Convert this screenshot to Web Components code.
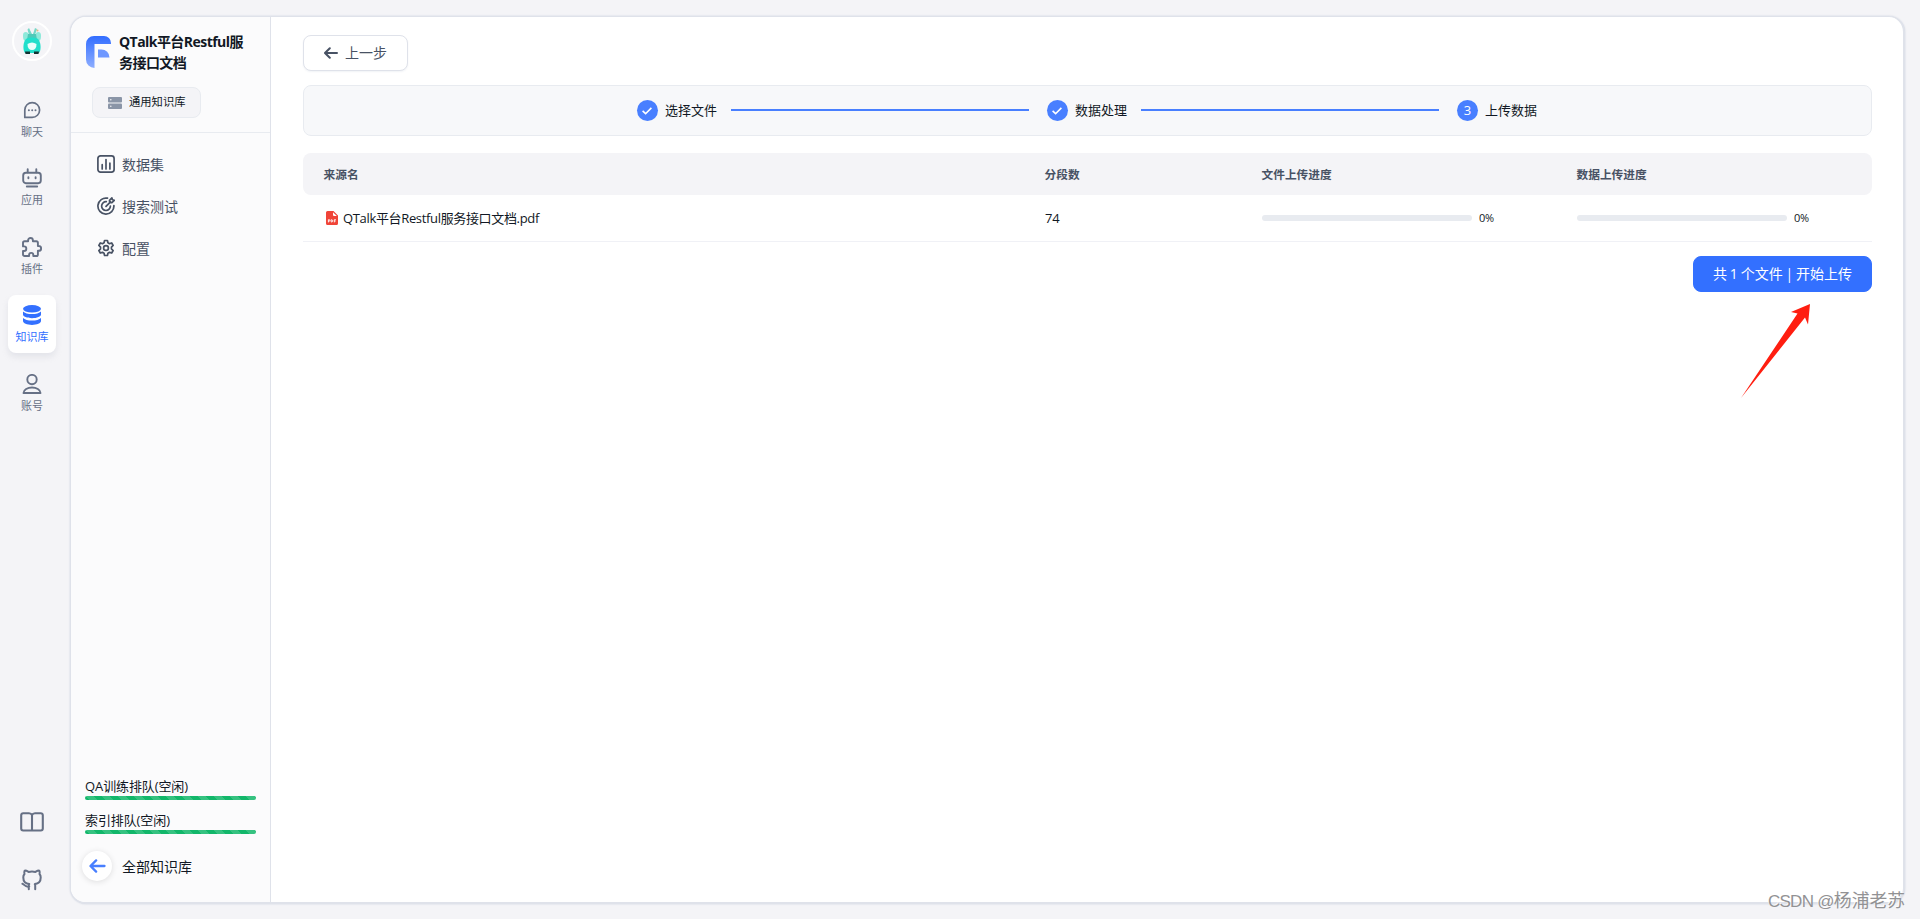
<!DOCTYPE html>
<html lang="zh-CN">
<head>
<meta charset="UTF-8">
<title>QTalk平台Restful服务接口文档</title>
<style>
  html, body { height: 100%; margin: 0; }
  body {
    background: #f4f4f7;
    color: #111824;
    font-family: "Open Sans", "Noto Sans CJK SC", sans-serif;
    font-size: 14px;
    overflow: hidden;
  }
</style>
</head>
<body>
<app-layout>
  <nav-rail slot="rail">
    <nav-item icon="chat">聊天</nav-item>
    <nav-item icon="app">应用</nav-item>
    <nav-item icon="plugin">插件</nav-item>
    <nav-item icon="db" active>知识库</nav-item>
    <nav-item icon="user">账号</nav-item>
  </nav-rail>
  <kb-sidebar slot="side">
    <span slot="title">QTalk平台Restful服务接口文档</span>
    <span slot="tag">通用知识库</span>
    <menu-item icon="chart">数据集</menu-item>
    <menu-item icon="target">搜索测试</menu-item>
    <menu-item icon="gear">配置</menu-item>
    <queue-bar slot="foot">QA训练排队(空闲)</queue-bar>
    <queue-bar slot="foot">索引排队(空闲)</queue-bar>
    <back-link slot="foot">全部知识库</back-link>
  </kb-sidebar>
  <import-page></import-page>
</app-layout>
<hint-arrow></hint-arrow>
<water-mark><span>CSDN @</span>杨浦老苏</water-mark>

<script>
  const ICONS = {
    chat: `<svg width="18" height="18" viewBox="0 0 18 18" fill="none" stroke="currentColor" stroke-width="1.7" stroke-linejoin="round"><path d="M1.800 16.400V9a7.400 7.400 0 1 1 7.400 7.400z"/><g fill="currentColor" stroke="none"><circle cx="5.900" cy="9.200" r="1"/><circle cx="9.200" cy="9.200" r="1"/><circle cx="12.500" cy="9.200" r="1"/></g></svg>`,
    app: `<svg width="20" height="20" viewBox="0 0 20 20" fill="none" stroke="currentColor" stroke-width="1.9" stroke-linecap="round"><rect x="1.200" y="4.800" width="17.600" height="10.400" rx="2.600"/><path d="M5.700 1.200v3M14.300 1.200v3M4.800 18.500h10.400"/><path d="M6.400 9.300v1M13.600 9.300v1"/></svg>`,
    plugin: `<svg width="20" height="20" viewBox="0 0 20 20" fill="none" stroke="currentColor" stroke-width="1.900" stroke-linejoin="round"><path d="M6.100 4.200V3.400a2.400 2.400 0 0 1 4.800 0v.8h3.400c.9 0 1.600.7 1.600 1.600v3.200h.8a2.400 2.400 0 0 1 0 4.800h-.8v3.600c0 .9-.7 1.600-1.600 1.600h-3v-1a2.100 2.100 0 0 0-4.200 0v1H2.600c-.9 0-1.600-.7-1.600-1.600v-3.400h1a2.300 2.300 0 0 0 0-4.600H1V5.800c0-.9.7-1.600 1.600-1.600z"/></svg>`,
    db: `<svg width="20" height="20" viewBox="0 0 20 20" fill="currentColor"><ellipse cx="10" cy="3.800" rx="9" ry="3.700"/><path d="M1 6.500c1.600 1.700 5 2.600 9 2.600s7.400-.9 9-2.600v3.100c0 2-4 3.700-9 3.700S1 11.600 1 9.600zM1 12.900c1.600 1.700 5 2.600 9 2.600s7.400-.9 9-2.600v3.100c0 2.200-4 3.900-9 3.900s-9-1.700-9-3.900z"/></svg>`,
    user: `<svg width="20" height="20" viewBox="0 0 20 20" fill="none" stroke="currentColor" stroke-width="1.900" stroke-linejoin="round"><circle cx="10" cy="5.600" r="4.700"/><path d="M1.500 19c0-3.400 4.200-5.500 8.500-5.500s8.500 2.100 8.500 5.500z"/></svg>`,
    book: `<svg width="24" height="20" viewBox="0 0 24 20" fill="none" stroke="currentColor" stroke-width="2.100" stroke-linejoin="round"><path d="M12 3.200C11.400 1.700 10.500 1.200 9 1.200H3.200C2 1.200 1.200 2 1.200 3.200v13.300c0 1.200.8 2 2 2h17.600c1.200 0 2-.8 2-2V3.200c0-1.200-.8-2-2-2H15c-1.500 0-2.400.5-3 2zM12 3.200v15"/></svg>`,
    github: `<svg width="22" height="22" viewBox="0 0 24 24" fill="none" stroke="currentColor" stroke-width="2.200" stroke-linecap="round" stroke-linejoin="round"><path d="M9 19c-4.300 1.400-5.500-2.500-7.500-3M15.500 22v-3.500c0-1 .1-1.400-.5-2 3.500-.4 6.500-1.700 6.500-7.200A5.200 5.200 0 0 0 20.200 5.500 5 5 0 0 0 20 1.800s-1.400-.3-4.200 1.400a14 14 0 0 0-7.600 0C5.400 1.500 4 1.800 4 1.800a5 5 0 0 0-.2 3.700 5.200 5.200 0 0 0-1.300 3.800c0 5.400 3 6.800 6.500 7.200-.6.6-.6 1.200-.5 2V22"/></svg>`,
    chart: `<svg width="18" height="18" viewBox="0 0 18 18" fill="none" stroke="currentColor" stroke-width="1.700" stroke-linecap="round"><rect x=".9" y=".9" width="16.200" height="16.200" rx="2.600"/><path d="M5.200 9.700v4.300M9 4.500V14M12.900 8.200V14"/></svg>`,
    target: `<svg width="18" height="18" viewBox="0 0 18 18" fill="none" stroke="currentColor" stroke-width="1.700" stroke-linecap="round" stroke-linejoin="round"><path d="M10.500 1.200A8 8 0 1 0 16.900 8.500M9.300 4.700a4.400 4.400 0 1 0 4.100 4.300M9 9.300l4.500-4.500M12.700 5.400l-.2-2.100L14.900.9l.6 1.900 1.800.5-2.400 2.300z"/></svg>`,
    gear: `<svg width="18" height="18" viewBox="0 0 24 24" fill="none" stroke="currentColor" stroke-width="2.300" stroke-linejoin="round"><circle cx="12" cy="12" r="3.200"/><path d="M10.100 2h3.800l.7 3 2.100 1.200 2.900-.9 1.900 3.300-2.200 2.100v2.600l2.200 2.100-1.900 3.300-2.900-.9-2.100 1.200-.7 3h-3.800l-.7-3-2.100-1.200-2.900.9-1.900-3.300 2.200-2.100v-2.600L2.500 8.600l1.900-3.300 2.900.9L9.400 5z"/></svg>`,
    server: `<svg width="14" height="12" viewBox="0 0 14 12"><rect width="14" height="5.500" rx="1" fill="#8a95a7"/><rect y="6.500" width="14" height="5.500" rx="1" fill="#8a95a7"/><g fill="#f4f4f7"><circle cx="2.800" cy="2.700" r=".8"/><circle cx="2.800" cy="9.300" r=".8"/></g></svg>`,
    arrow: `<svg width="14" height="12" viewBox="0 0 14 12" fill="none" stroke="currentColor" stroke-width="2" stroke-linecap="round" stroke-linejoin="round"><path d="M13 6H1.200M5.800 1.200 1 6l4.800 4.800"/></svg>`,
    check: `<svg width="10" height="8" viewBox="0 0 10 8" fill="none" stroke="#fff" stroke-width="1.600"><path d="M.6 3.900 3.600 6.700 9.400.9"/></svg>`,
    pdf: `<svg width="12" height="14" viewBox="0 0 12 14"><path fill="#f04438" d="M1.500 0H7.500L12 4.500V12.500A1.500 1.500 0 0 1 10.500 14h-9A1.500 1.500 0 0 1 0 12.500v-11A1.500 1.500 0 0 1 1.500 0z"/><path fill="#fff" d="M7 1.200 10.800 5H8A1 1 0 0 1 7 4z"/><path fill="none" stroke="#fff" stroke-width=".9" d="M2.400 11.400V8.700h.8a.7.7 0 0 1 0 1.500h-.8M5.200 8.700v2.300h.4c1.500 0 1.500-2.300 0-2.300zM8.300 11.400V8.700h1.600M8.300 10h1.400"/></svg>`
  };

  function define(name, render) {
    customElements.define(name, class extends HTMLElement {
      constructor() {
        super();
        this.attachShadow({ mode: 'open' });
      }
      connectedCallback() {
        this.shadowRoot.innerHTML = render(this);
      }
    });
  }

  define('app-layout', () => `
    <style>
      :host { display: flex; height: 100vh; box-sizing: border-box; padding: 16px 15px 15px 0; }
      .rail { width: 70px; flex: none; margin-top: -16px; margin-bottom: -15px; display: flex; }
      .panel {
        flex: 1; display: flex; min-width: 0; box-sizing: border-box; overflow: hidden;
        background: #fff; border: 1px solid #dfe2ea; border-right-width: 2px; border-bottom-width: 2px;
        border-radius: 16px; box-shadow: 0 0 2px rgba(19, 51, 107, .18);
      }
    </style>
    <div class="rail"><slot name="rail"></slot></div>
    <div class="panel"><slot name="side"></slot><slot></slot></div>
  `);

  define('nav-rail', () => `
    <style>
      :host { display: flex; flex-direction: column; align-items: center; width: 64px; color: #667085; }
      .avatar {
        width: 36px; height: 36px; margin-top: 21px; border: 2px solid #fff; border-radius: 50%;
        display: flex; align-items: center; justify-content: center; background: #f4f4f7;
      }
      .items { display: flex; flex-direction: column; gap: 10.670px; margin-top: 28.500px; flex: 1; }
      .links { display: flex; flex-direction: column; align-items: center; gap: 37px; margin-bottom: 28px; }
      svg { display: block; }
    </style>
    <div class="avatar">
      <svg width="20" height="28" viewBox="0 0 20 28">
        <path fill="#77d8c8" d="M7 8 5.500 2.500 7 1l3 6zM11 7l2-6 2 1-2 6z"/>
        <path fill="#8fe9da" d="M1 8c0-3 3-4 5-2l1 5-4 3c-2-1-2-3-2-6zM19 8c0-3-3-4-5-2l-1 5 4 3c2-1 2-3 2-6z"/>
        <path fill="#4fc9b8" d="M6 7h8l1 6H5z"/>
        <path fill="#22dfcb" d="M4 12c3-2 9-2 12 0 3 3 3.500 11 1 14H3c-2.500-3-2-11 1-14z"/>
        <path fill="#e9fffb" d="M5.500 17c3-2 6-2 9 0 0 4-1.500 6-4.500 6s-4.500-2-4.500-6z"/>
        <path fill="#123332" d="M3 24.500h5V27H3.500zM12 24.500h5l-.5 2.500H12z"/>
        <circle cx="15.500" cy="3.500" r="1" fill="#e2b884"/>
      </svg>
    </div>
    <div class="items"><slot></slot></div>
    <div class="links">${ICONS.book}${ICONS.github}</div>
  `);

  define('nav-item', el => `
    <style>
      :host {
        display: flex; flex-direction: column; align-items: center; box-sizing: border-box;
        width: 48px; height: 58px; padding-top: 10px; border-radius: 8px; font-size: 11px;
      }
      :host([active]) { background: #fff; color: #3370ff; box-shadow: 0 4px 6px rgba(161, 167, 179, .2); }
      .icon { height: 20px; display: flex; align-items: center; }
      .text { line-height: 16px; margin-top: 4px; white-space: nowrap; }
      svg { display: block; }
    </style>
    <div class="icon">${ICONS[el.getAttribute('icon')]}</div>
    <div class="text"><slot></slot></div>
  `);

  define('kb-sidebar', () => `
    <style>
      :host {
        display: flex; flex-direction: column; flex: none; box-sizing: border-box; width: 200px;
        background: #fbfbfc; border-right: 1px solid #dfe2ea;
      }
      .head { box-sizing: border-box; height: 116px; padding: 7px 20px 0 15px; border-bottom: 1px solid #e8ebf0; }
      .name { display: flex; align-items: center; gap: 8px; height: 56px; font-weight: 700; line-height: 21px; }
      .name div { flex: 1; margin-right: -5px; letter-spacing: -.55px; }
      .name svg { flex: none; }
      .tag {
        display: inline-flex; align-items: center; gap: 8px; box-sizing: border-box; width: 109px; height: 31px;
        margin: 7px 0 0 6px; padding-left: 15px; border: 1px solid #e8ebf0; border-radius: 8px;
        background: #f4f4f7; font-size: 11.300px; white-space: nowrap;
      }
      .tag span { margin: -3px 0 0 -1px; }
      .menu { flex: 1; padding: 10px 0 0 26px; }
      .foot { padding: 0 13px 21px 14px; }
    </style>
    <div class="head">
      <div class="name">
        <svg width="25" height="32" viewBox="0 0 25 32">
          <defs><linearGradient id="g" x1="0" y1="0" x2="0" y2="1"><stop offset="0" stop-color="#326dff"/><stop offset="1" stop-color="#8eaeff"/></linearGradient></defs>
          <path fill="url(#g)" d="M8 0h10a7 7 0 0 1 7 7v1H8.500v24A8.500 8.500 0 0 1 0 23.500V8A8 8 0 0 1 8 0z"/>
          <path fill="#6f98ff" d="M12 13.500h3.500a8 8 0 0 1 8 8H12z"/>
        </svg>
        <div><slot name="title"></slot></div>
      </div>
      <div class="tag">${ICONS.server}<span><slot name="tag"></slot></span></div>
    </div>
    <div class="menu"><slot></slot></div>
    <div class="foot"><slot name="foot"></slot></div>
  `);

  define('menu-item', el => `
    <style>
      :host { display: flex; align-items: center; height: 42px; gap: 7px; color: #485264; }
      svg { display: block; }
      span { padding-top: 1px; line-height: 20px; }
    </style>
    ${ICONS[el.getAttribute('icon')]}<span><slot></slot></span>
  `);

  define('queue-bar', () => `
    <style>
      :host { display: block; height: 34px; font-size: 13px; white-space: nowrap; letter-spacing: -.1px; }
      .text { height: 18px; line-height: 16px; }
      .bar {
        width: 171px; height: 4px; border-radius: 2px; background-color: #12b76a;
        background-image: linear-gradient(45deg, rgba(255,255,255,.15) 25%, transparent 25%, transparent 50%, rgba(255,255,255,.15) 50%, rgba(255,255,255,.15) 75%, transparent 75%);
        background-size: 16px 16px;
      }
    </style>
    <div class="text"><slot></slot></div><div class="bar"></div>
  `);

  define('back-link', () => `
    <style>
      :host { display: flex; align-items: center; gap: 10px; margin: 5px 0 0 -3px; }
      .round {
        width: 30px; height: 30px; border-radius: 50%; background: #fff; color: #487fff;
        display: flex; align-items: center; justify-content: center; box-shadow: 0 1px 6px rgba(0, 0, 0, .12);
      }
      svg { width: 17px; height: 14px; }
    </style>
    <div class="round">${ICONS.arrow}</div><span><slot></slot></span>
  `);

  define('app-button', el => `
    <style>
      :host {
        display: inline-flex; align-items: center; box-sizing: border-box; height: 36px; padding: 0 20px;
        border: 1px solid #dfe2ea; border-radius: 8px; gap: 7px; color: #485264; background: #fff;
        box-shadow: 0 1px 2px rgba(19, 51, 107, .06); white-space: nowrap;
      }
      :host([primary]) {
        background: #3370ff; border-color: #3370ff; color: #fff; box-shadow: none;
        padding: 0 19px; word-spacing: -.8px;
      }
      span { margin-top: -2px; }
      svg { display: block; }
    </style>
    ${ICONS[el.getAttribute('icon')] || ''}<span><slot></slot></span>
  `);

  define('step-item', el => `
    <style>
      :host { display: flex; align-items: center; font-size: 13px; width: 410px; }
      :host([last]) { width: auto; }
      .dot {
        flex: none; width: 21px; height: 21px; border-radius: 50%; background: #487fff; color: #fff;
        display: flex; align-items: center; justify-content: center; margin: 0 7px 0 -1px;
      }
      .num, .text { margin-top: -2px; }
      .line { width: 298px; height: 2px; margin: -2px 0 0 14px; background: #487fff; }
      svg { display: block; }
    </style>
    <div class="dot">${el.hasAttribute('mark') ? `<span class="num">${el.getAttribute('mark')}</span>` : ICONS.check}</div>
    <span class="text"><slot></slot></span>
    ${el.hasAttribute('last') ? '' : '<div class="line"></div>'}
  `);

  define('progress-bar', () => `
    <style>
      :host { display: flex; align-items: center; gap: 7px; height: 16px; font-size: 11px; letter-spacing: -.3px; }
      .track { width: 210px; height: 6px; border-radius: 3px; background: #e8ebf0; }
      span { margin-top: -1px; }
    </style>
    <div class="track"></div><span><slot></slot></span>
  `);

  define('upload-table', () => `
    <style>
      :host { display: block; }
      .row { display: grid; grid-template-columns: 721px 217px 315px 1fr; align-items: center; padding-left: 21px; }
      .head { height: 42px; border-radius: 8px; background: #f4f4f7; color: #485264; font-size: 11.700px; font-weight: 700; }
      .head div { margin: -2px 0 0 -.5px; }
      .body { height: 46px; border-bottom: 1px solid #f0f1f6; font-size: 13px; }
      .file { display: flex; align-items: center; gap: 5px; padding-left: 2px; letter-spacing: -.34px; }
      .file span { margin-top: -2px; }
      .num { letter-spacing: -.3px; }
    </style>
    <div class="row head"><div>来源名</div><div>分段数</div><div>文件上传进度</div><div>数据上传进度</div></div>
    <div class="row body">
      <div class="file">${ICONS.pdf}<span>QTalk平台Restful服务接口文档.pdf</span></div>
      <div class="num">74</div>
      <progress-bar>0%</progress-bar>
      <progress-bar>0%</progress-bar>
    </div>
  `);

  define('import-page', () => `
    <style>
      :host { display: flex; flex-direction: column; flex: 1; padding: 18px 31px 0 32px; }
      .back { height: 36px; display: flex; }
      .steps {
        display: flex; align-items: center; justify-content: center; box-sizing: border-box; height: 51px;
        margin: 14px 0 17px; border: 1px solid #e8ebf0; border-radius: 8px; background: #f7f8fa;
      }
      .foot { display: flex; justify-content: flex-end; margin-top: 14px; }
    </style>
    <div class="back"><app-button icon="arrow">上一步</app-button></div>
    <div class="steps">
      <step-item>选择文件</step-item>
      <step-item>数据处理</step-item>
      <step-item mark="3" last>上传数据</step-item>
    </div>
    <upload-table></upload-table>
    <div class="foot"><app-button primary>共 1 个文件 | 开始上传</app-button></div>
  `);

  // red pointer that lies over the page, under the upload button
  define('hint-arrow', () => `
    <style>
      :host { position: absolute; left: 1741px; top: 303px; pointer-events: none; }
      svg { display: block; }
    </style>
    <svg width="70" height="96" viewBox="0 0 70 96"><path fill="#ff1e10" d="M69 1 67 21.500 64 14.500 0 95 56.500 10.500 50 9z"/></svg>
  `);

  define('water-mark', () => `
    <style>
      :host {
        position: absolute; right: 15px; bottom: 4px; line-height: 26px; font-size: 17.800px; white-space: nowrap;
        font-family: "Liberation Sans", "Noto Sans CJK SC", sans-serif; color: #929294;
        text-shadow: -1px -1px 0 rgba(255, 255, 255, .7);
      }
      ::slotted(span) { font-size: 17px; letter-spacing: -.7px; }
    </style>
    <slot></slot>
  `);
</script>
</body>
</html>
